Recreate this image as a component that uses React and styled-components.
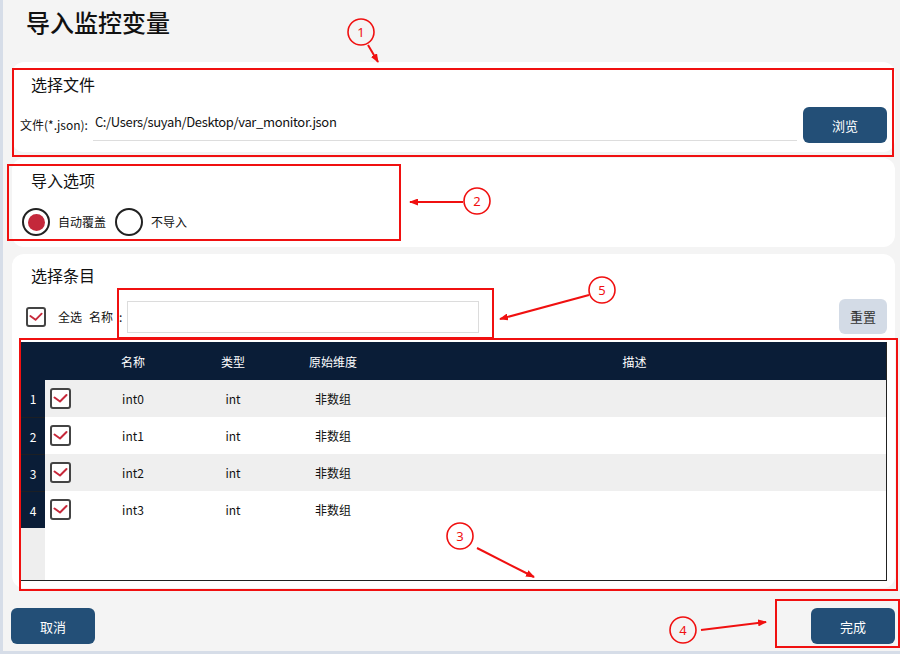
import React from "react";
import styled, { createGlobalStyle } from "styled-components";

const GlobalStyle = createGlobalStyle`
  html, body {
    margin: 0;
    padding: 0;
  }
  body {
    font-family: "Noto Sans CJK SC", "Noto Sans", sans-serif;
    background: #f4f4f4;
    color: #111;
  }
`;

const rows = [
  { id: 1, name: "int0", type: "int", dim: "非数组" },
  { id: 2, name: "int1", type: "int", dim: "非数组" },
  { id: 3, name: "int2", type: "int", dim: "非数组" },
  { id: 4, name: "int3", type: "int", dim: "非数组" },
];

function Check({ size }) {
  return (
    <CheckBox $size={size}>
      <svg width={size - 4} height={size - 4} viewBox="0 0 17 17">
        <path
          d="M2.5 7.5 L8 11.5 L14.5 5"
          fill="none"
          stroke="#c7283a"
          strokeWidth="2"
          strokeLinecap="round"
          strokeLinejoin="round"
        />
      </svg>
    </CheckBox>
  );
}

function Annotations() {
  const red = "#f01010";
  const marks = [
    { n: 1, cx: 361, cy: 32, line: [368, 45, 378, 62] },
    { n: 2, cx: 477, cy: 201, line: [463, 202, 410, 202] },
    { n: 5, cx: 602, cy: 290, line: [589, 295, 500, 319] },
    { n: 3, cx: 460, cy: 536, line: [477, 548, 534, 577] },
    { n: 4, cx: 683, cy: 630, line: [701, 630, 766, 622] },
  ];
  return (
    <Overlay width="900" height="654" viewBox="0 0 900 654">
      <defs>
        <marker
          id="head"
          markerWidth="9"
          markerHeight="7"
          refX="8"
          refY="3.5"
          orient="auto"
          markerUnits="userSpaceOnUse"
        >
          <path d="M0 0 L9 3.5 L0 7 Z" fill={red} />
        </marker>
      </defs>
      <g fill="none" stroke={red} strokeWidth="2">
        <rect x="13" y="69" width="880" height="87" />
        <rect x="8" y="165" width="392" height="75" />
        <rect x="118" y="289" width="375" height="49" />
        <rect x="20" y="339" width="877" height="251" />
        <rect x="776" y="600" width="123" height="47" />
      </g>
      {marks.map((m) => (
        <g key={m.n}>
          <circle cx={m.cx} cy={m.cy} r="13" fill="none" stroke={red} strokeWidth="1.6" />
          <text
            x={m.cx}
            y={m.cy + 4.5}
            textAnchor="middle"
            fontSize="13"
            fill={red}
            fontFamily="Noto Sans, sans-serif"
          >
            {m.n}
          </text>
          <line
            x1={m.line[0]}
            y1={m.line[1]}
            x2={m.line[2]}
            y2={m.line[3]}
            stroke={red}
            strokeWidth="2"
            markerEnd="url(#head)"
          />
        </g>
      ))}
    </Overlay>
  );
}

export default function App() {
  return (
    <Frame>
      <GlobalStyle />
      <Shell>
        <PageTitle>导入监控变量</PageTitle>

        <Card $pad="11px 8px 9px 8px" $gap={12}>
          <SectionTitle $indent={11}>选择文件</SectionTitle>
          <FileRow>
            <SmallLabel>文件(*.json):</SmallLabel>
            <PathField>C:/Users/suyah/Desktop/var_monitor.json</PathField>
            <Button>浏览</Button>
          </FileRow>
        </Card>

        <Card $pad="11px 10px 11px 10px" $gap={17} $top={6}>
          <SectionTitle $indent={9}>导入选项</SectionTitle>
          <RadioRow>
            <RadioItem>
              <Radio>
                <Dot />
              </Radio>
              <SmallLabel>自动覆盖</SmallLabel>
            </RadioItem>
            <RadioItem>
              <Radio />
              <SmallLabel>不导入</SmallLabel>
            </RadioItem>
          </RadioRow>
        </Card>

        <Card $pad="10px 8px 7px 9px" $gap={8} $top={7}>
          <SectionTitle $indent={10} $mb={5}>选择条目</SectionTitle>
          <FilterRow>
            <FilterLeft>
              <Check size={20} />
              <SmallLabel $ml={12}>全选</SmallLabel>
              <SmallLabel $ml={7}>名称</SmallLabel>
              <SmallLabel $ml={6}>:</SmallLabel>
              <SearchBox />
            </FilterLeft>
            <Button $variant="light">重置</Button>
          </FilterRow>

          <Table>
            <HeadRow>
              <span />
              <span />
              <HeadCell>名称</HeadCell>
              <HeadCell>类型</HeadCell>
              <HeadCell>原始维度</HeadCell>
              <HeadCell>描述</HeadCell>
            </HeadRow>
            {rows.map((r, i) => (
              <BodyRow key={r.id} $alt={i % 2 === 0}>
                <IndexCell $first={i === 0}>{r.id}</IndexCell>
                <CheckCell>
                  <Check size={21} />
                </CheckCell>
                <Cell>{r.name}</Cell>
                <Cell>{r.type}</Cell>
                <Cell>{r.dim}</Cell>
                <Cell />
              </BodyRow>
            ))}
            <Filler>
              <FillerIndex />
              <span />
            </Filler>
          </Table>
        </Card>

        <Footer>
          <Button>取消</Button>
          <Button>完成</Button>
        </Footer>
      </Shell>
      <Annotations />
    </Frame>
  );
}

const Frame = styled.div`
  position: relative;
  width: 900px;
  height: 654px;
  overflow: hidden;
`;

const Shell = styled.div`
  box-sizing: border-box;
  width: 900px;
  height: 654px;
  background: #f4f4f4;
  border-left: 3px solid #d6dde8;
  border-bottom: 3px solid #d6dde8;
  padding: 6px 5px 0 9px;
  display: flex;
  flex-direction: column;
`;

const PageTitle = styled.h1`
  margin: 0 0 24px 14px;
  font-size: 24px;
  line-height: 32px;
  font-weight: 500;
  color: #111;
`;

const Card = styled.section`
  background: #fff;
  border-radius: 12px;
  padding: ${(p) => p.$pad};
  margin-top: ${(p) => p.$top || 0}px;
  display: flex;
  flex-direction: column;
  gap: ${(p) => p.$gap}px;
`;

const SectionTitle = styled.h2`
  margin: 0 0 ${(p) => p.$mb || 0}px ${(p) => p.$indent}px;
  font-size: 16px;
  line-height: 22px;
  font-weight: 400;
  color: #111;
`;

const SmallLabel = styled.span`
  font-size: 12px;
  line-height: 16px;
  color: #111;
  margin-left: ${(p) => p.$ml || 0}px;
  white-space: nowrap;
`;

const FileRow = styled.div`
  display: flex;
  align-items: center;
  height: 36px;
`;

const PathField = styled.div`
  flex: 1;
  margin: 0 6px 0 5px;
  height: 33px;
  line-height: 30px;
  padding-left: 2px;
  font-size: 13px;
  letter-spacing: -0.35px;
  color: #111;
  border-bottom: 1px solid #dddddd;
  align-self: flex-start;
`;

const Button = styled.button`
  width: ${(p) => (p.$variant === "light" ? 48 : 84)}px;
  height: ${(p) => (p.$variant === "light" ? 35 : 36)}px;
  border: none;
  border-radius: 6px;
  background: ${(p) => (p.$variant === "light" ? "#d3dbe6" : "#234f77")};
  color: ${(p) => (p.$variant === "light" ? "#333" : "#fff")};
  font-family: "Noto Sans CJK SC", sans-serif;
  font-size: 13px;
  padding: 0;
`;

const RadioRow = styled.div`
  display: flex;
  align-items: center;
  gap: 9px;
  height: 28px;
`;

const RadioItem = styled.label`
  display: flex;
  align-items: center;
  gap: 8px;
`;

const Radio = styled.span`
  box-sizing: border-box;
  width: 28px;
  height: 28px;
  border: 2.5px solid #222;
  border-radius: 50%;
  display: grid;
  place-items: center;
  background: #fff;
`;

const Dot = styled.span`
  width: 17px;
  height: 17px;
  border-radius: 50%;
  background: #c4283b;
`;

const CheckBox = styled.span`
  box-sizing: border-box;
  width: ${(p) => p.$size}px;
  height: ${(p) => p.$size}px;
  border: 2px solid #444;
  border-radius: 3px;
  background: #fff;
  display: grid;
  place-items: center;
  flex-shrink: 0;
`;

const FilterRow = styled.div`
  display: flex;
  align-items: center;
  justify-content: space-between;
  height: 35px;
`;

const FilterLeft = styled.div`
  display: flex;
  align-items: center;
  padding-left: 5px;
`;

const SearchBox = styled.div`
  box-sizing: border-box;
  width: 352px;
  height: 32px;
  margin-left: 5px;
  border: 1px solid #dcdcdc;
  background: #fff;
`;

const Table = styled.div`
  height: 239px;
  box-sizing: border-box;
  border-right: 1px solid #222;
  border-bottom: 1px solid #222;
  display: flex;
  flex-direction: column;
  background: #fff;
`;

const columns = "24px 38px 100px 100px 100px 1fr";

const HeadRow = styled.div`
  display: grid;
  grid-template-columns: ${columns};
  height: 38px;
  background: #0a1d37;
  align-items: center;
`;

const HeadCell = styled.span`
  text-align: center;
  color: #fff;
  font-size: 12px;
`;

const BodyRow = styled.div`
  display: grid;
  grid-template-columns: ${columns};
  height: 37px;
  align-items: center;
  background: ${(p) => (p.$alt ? "#efefef" : "#fff")};
`;

const IndexCell = styled.span`
  box-sizing: border-box;
  height: 100%;
  display: grid;
  place-items: center;
  background: #0a1d37;
  color: #fff;
  font-size: 12px;
  border-top: ${(p) => (p.$first ? "none" : "1px solid #1c1f24")};
`;

const CheckCell = styled.span`
  display: flex;
  align-items: center;
  padding-left: 5px;
`;

const Cell = styled.span`
  text-align: center;
  font-size: 12px;
  color: #111;
`;

const Filler = styled.div`
  flex: 1;
  display: grid;
  grid-template-columns: 24px 1fr;
`;

const FillerIndex = styled.span`
  background: #eeeeee;
`;

const Footer = styled.div`
  margin-top: 20px;
  display: flex;
  justify-content: space-between;
  margin-left: -1px;
`;

const Overlay = styled.svg`
  position: absolute;
  left: 0;
  top: 0;
  pointer-events: none;
`;
